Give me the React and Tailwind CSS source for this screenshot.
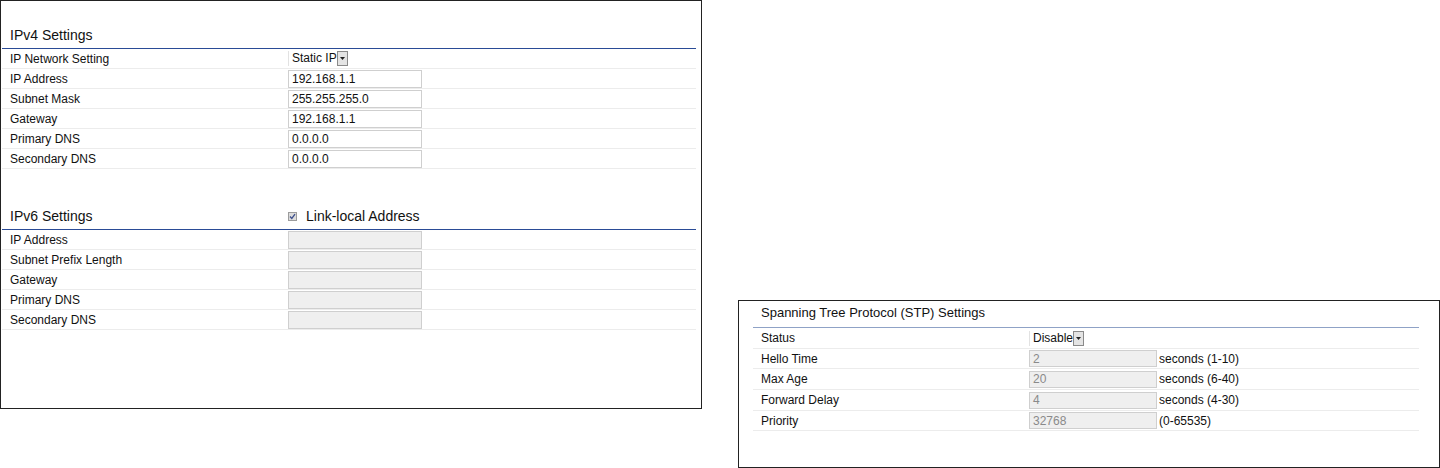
import React from "react";

const font = { fontFamily: '"Liberation Sans", Arial, sans-serif' };

const ipv4Rows = [
  { label: "IP Address", value: "192.168.1.1" },
  { label: "Subnet Mask", value: "255.255.255.0" },
  { label: "Gateway", value: "192.168.1.1" },
  { label: "Primary DNS", value: "0.0.0.0" },
  { label: "Secondary DNS", value: "0.0.0.0" },
];

const ipv6Rows = ["IP Address", "Subnet Prefix Length", "Gateway", "Primary DNS", "Secondary DNS"];

const stpRows = [
  { label: "Hello Time", value: "2", hint: "seconds (1-10)", h: "h-[20px]" },
  { label: "Max Age", value: "20", hint: "seconds (6-40)", h: "h-[21px]" },
  { label: "Forward Delay", value: "4", hint: "seconds (4-30)", h: "h-[21px]" },
  { label: "Priority", value: "32768", hint: "(0-65535)", h: "h-[20px]" },
];

// little grey drop-down button of the old style select
const SelectBox = ({ value }) => (
  <div className="flex items-center h-[15px] border-l border-[#e2e2e2]">
    <span className="pl-[3px] leading-[15px] text-[12px] text-[#111]">{value}</span>
    <span className="flex items-center justify-center w-[11px] h-[15px] border border-[#8a8a8a] bg-[#e4e4e4]">
      <svg width="5" height="3" viewBox="0 0 5 3">
        <polygon points="0,0 5,0 2.5,3" fill="#222" />
      </svg>
    </span>
  </div>
);

const TextBox = ({ value, disabled, w = "w-[134px]", h = "h-[18px]" }) => (
  <div
    className={`${w} ${h} flex items-center border border-[#cfcfcf] pl-[3px] text-[12px] ${
      disabled ? "bg-[#efefef] text-[#8a8a8a]" : "bg-white text-[#111]"
    }`}
  >
    {value}
  </div>
);

const Row = ({ label, children }) => (
  <div className="flex items-center h-[20px] border-b border-[#ececec]">
    <div className="w-[286px] pl-[8px] text-[12px] text-[#111]">{label}</div>
    {children}
  </div>
);

const CheckMark = () => (
  <svg width="9" height="9" viewBox="0 0 9 9" className="shrink-0">
    <rect x="0.5" y="0.5" width="8" height="8" fill="#dcdcdc" stroke="#9c9c9c" />
    <polyline points="2,4.5 3.8,6.5 7,2.2" fill="none" stroke="#3d4f8c" strokeWidth="1.3" />
  </svg>
);

export default function App() {
  return (
    <div className="relative w-[1440px] h-[468px] bg-white" style={font}>
      <div className="flex items-start gap-[36px]">
        {/* IP settings panel */}
        <div className="w-[702px] h-[409px] border border-[#222] pl-px">
          <div className="w-[694px]">
            <div className="pt-[26px] pb-[5px] border-b border-[#2a4b96]">
              <div className="pl-[8px] text-[14px] leading-[16px] text-[#111]">IPv4 Settings</div>
            </div>
            <Row label="IP Network Setting">
              <SelectBox value="Static IP" />
            </Row>
            {ipv4Rows.map((r) => (
              <Row key={r.label} label={r.label}>
                <TextBox value={r.value} />
              </Row>
            ))}

            <div className="mt-[39px] pb-[5px] flex items-center border-b border-[#2a4b96]">
              <div className="w-[286px] pl-[8px] text-[14px] leading-[16px] text-[#111]">IPv6 Settings</div>
              <div className="flex items-center gap-[9px]">
                <CheckMark />
                <span className="text-[14px] leading-[16px] text-[#111]">Link-local Address</span>
              </div>
            </div>
            {ipv6Rows.map((label) => (
              <Row key={label} label={label}>
                <TextBox value="" disabled />
              </Row>
            ))}
          </div>
        </div>

        {/* STP panel */}
        <div className="mt-[300px] w-[702px] h-[168px] border border-[#222] pl-[14px]">
          <div className="w-[666px]">
            <div className="pt-[4px] pb-[6px] border-b border-[#8fa2c6]">
              <div className="pl-[8px] text-[13px] leading-[16px] text-[#111]">
                Spanning Tree Protocol (STP) Settings
              </div>
            </div>
            <div className="flex items-center h-[21px] border-b border-[#ececec]">
              <div className="w-[276px] pl-[8px] text-[12px] text-[#111]">Status</div>
              <SelectBox value="Disable" />
            </div>
            {stpRows.map((r) => (
              <div key={r.label} className={`flex items-center ${r.h} border-b border-[#ececec]`}>
                <div className="w-[276px] pl-[8px] text-[12px] text-[#111]">{r.label}</div>
                <TextBox value={r.value} disabled w="w-[128px]" h="h-[17px]" />
                <span className="ml-[2px] text-[12px] text-[#111]">{r.hint}</span>
              </div>
            ))}
          </div>
        </div>
      </div>
    </div>
  );
}
